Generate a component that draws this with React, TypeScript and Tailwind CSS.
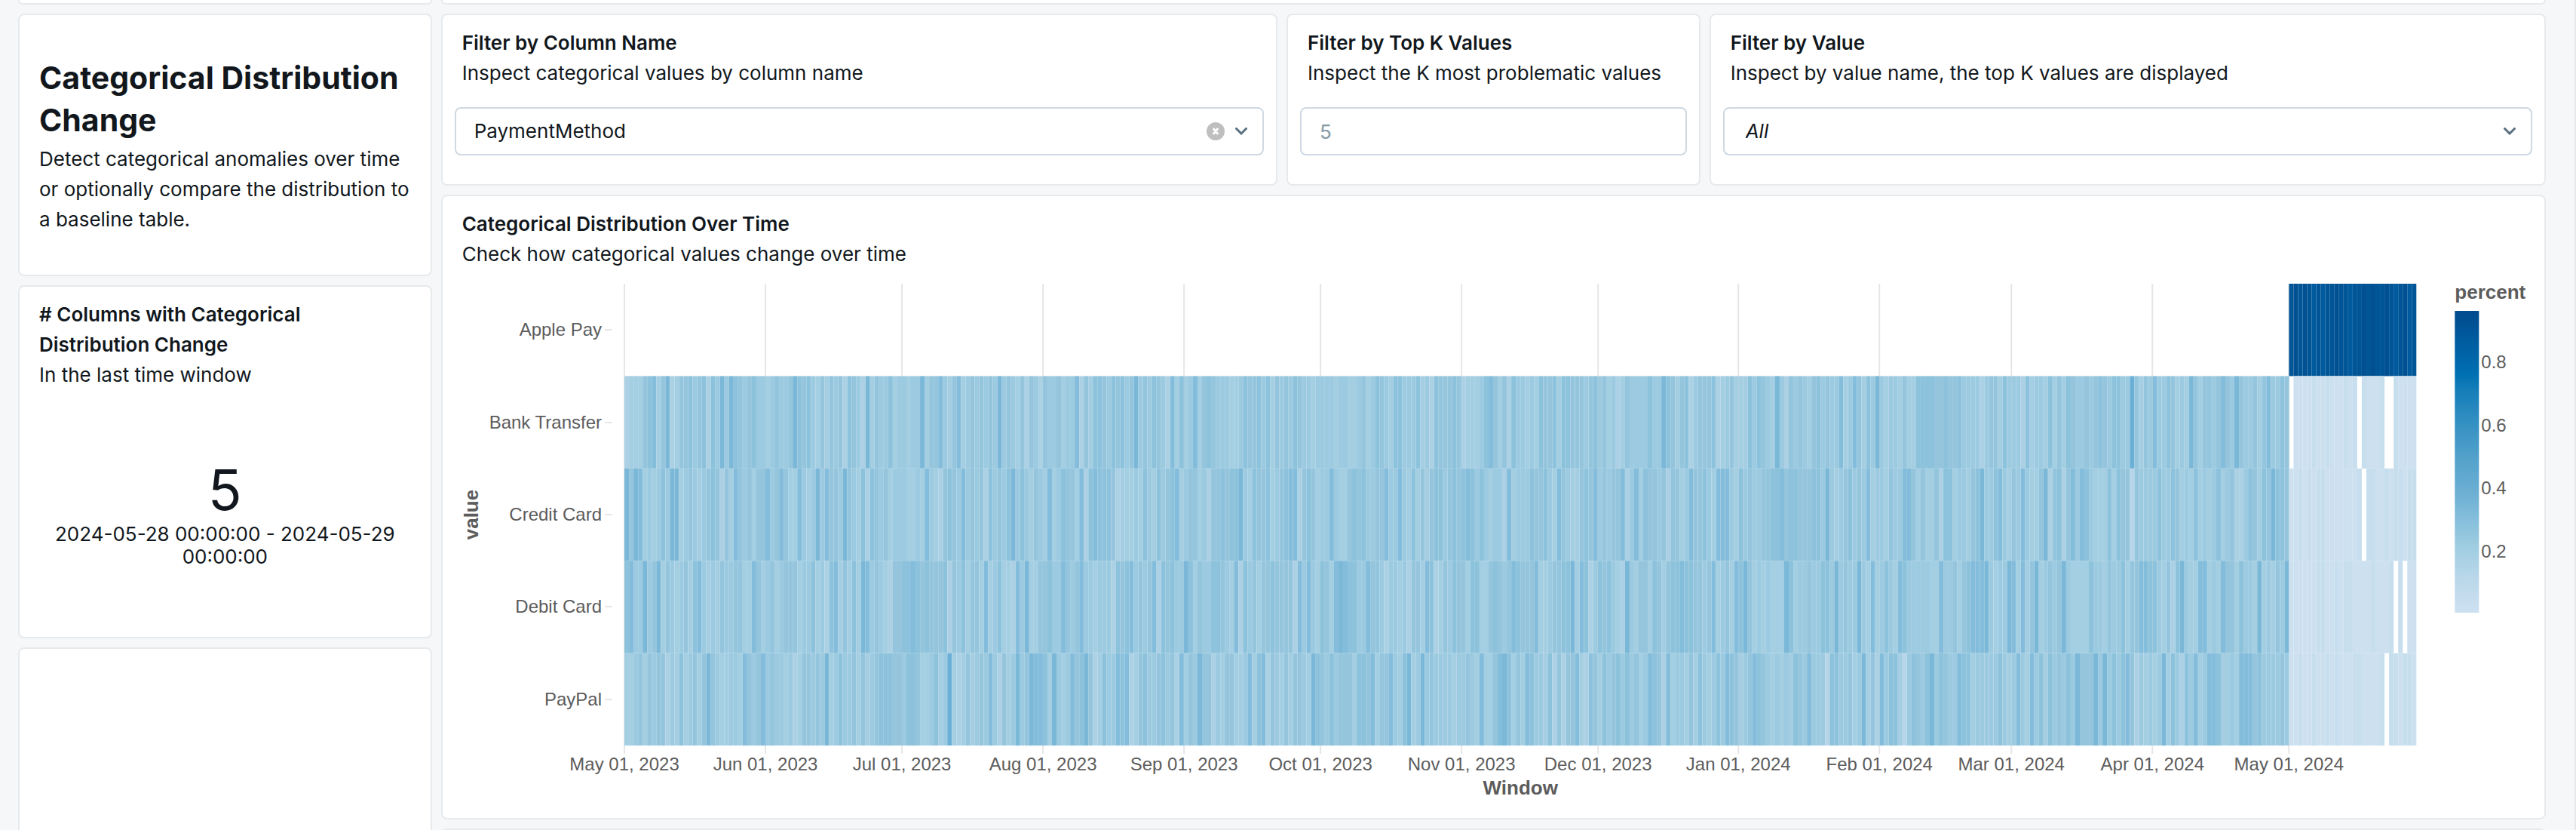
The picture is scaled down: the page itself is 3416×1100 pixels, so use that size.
import { ReactNode } from "react";

const PLOT = { left: 241, top: 20, width: 2376, height: 612 };

const BANDS = ["Apple Pay", "Bank Transfer", "Credit Card", "Debit Card", "PayPal"];

const MONTHS = [
  { day: 0, label: "May 01, 2023" },
  { day: 31, label: "Jun 01, 2023" },
  { day: 61, label: "Jul 01, 2023" },
  { day: 92, label: "Aug 01, 2023" },
  { day: 123, label: "Sep 01, 2023" },
  { day: 153, label: "Oct 01, 2023" },
  { day: 184, label: "Nov 01, 2023" },
  { day: 214, label: "Dec 01, 2023" },
  { day: 245, label: "Jan 01, 2024" },
  { day: 276, label: "Feb 01, 2024" },
  { day: 305, label: "Mar 01, 2024" },
  { day: 336, label: "Apr 01, 2024" },
  { day: 366, label: "May 01, 2024" },
];

// Share per day, one character a day: "a" and "b" are the smallest, 1-9 rise
// from there, "x", "y" and "z" are the largest, and "-" is a day without rows.
const LEVEL_COLORS: Record<string, string> = {
  a: "#cce0f0",
  b: "#c6deed",
  "1": "#b6d5e8",
  "2": "#acd1e5",
  "3": "#a4cee2",
  "4": "#9ccae0",
  "5": "#94c5dd",
  "6": "#8cc2db",
  "7": "#84bddb",
  "8": "#7bb8d8",
  "9": "#6aafd6",
  x: "#005a9e",
  y: "#005597",
  z: "#005092",
};

const DAYS = 394;
const YEAR = 366;

const SERIES = [
  "-".repeat(YEAR) + "yzyzyxyxyyzyyxyyzyzyyzyxyzxy",
  "2333567358 2355645626 4848654564 4345445865 6435354526 5428354463 4434483557 4357345454 5484543525 4254453447 2536654656 4584546542 7363473565 4443346556 4635454654 4344443443 3453465436 6444634265 5565233346 7535264434 3655636655 5456453423 5444464486 5356245556 2345333646 5438425454 3564544734 7536484344 3533666655 6556444424 5536444263 4436353654 4545654664 4953547446 5343853554 5754854453 574465 -aaaabaabaaabab-baaab--baaaa",
  "8587343464 8834543456 5253754535 5745753374 3484755485 4362654534 4433437432 5654745452 6454684643 5437346553 7267666523 3343643645 6734553425 5656684365 5634567725 6534474335 6564455744 7436353566 4565676464 3442734446 5564375433 5657454557 2473655452 5534755643 7774364544 5566756655 5664843456 4547344354 4775353352 6634435684 4674354743 3582562574 7643336365 5154444644 6534363434 6345224653 658665 aabababbaaaaaaab-bbaababbabb",
  "6744845835 4345367434 3544553375 3453455534 4634267353 6387454325 5667656555 6254635537 3463327483 3556447545 7443444265 6745457265 6448635446 6543726453 5565555274 7436537876 6447554244 3425537623 5465536633 5654576555 7334556683 7624656432 8435536535 6676655457 3453768534 3433386344 5446648454 4843734643 7644444337 4453567778 4344873735 8345458433 3364435446 3557766435 2684337734 3755364438 343548 aaaaaabbaababbaaaabaaab-b-aa",
  "3345354552 4363453585 4334437545 7454434235 5454834644 5353456665 5466533463 4932353454 7425348458 7763843475 6852364476 7235644564 5273548552 4355334736 7254353554 3865464555 3665735574 3683484544 4434454373 3578635376 4436252557 3265364564 6453476527 3443536434 6476534576 5434343654 7444166445 3483527466 3146546846 5447663444 4464347437 4636454648 5558484646 7524343483 6426473477 6334377756 444454 aabaabaababaaabbaaaab-bbabba",
].map((s) => s.replace(/ /g, ""));

const LEGEND_STOPS = [
  ["0%", "#004b8d"],
  ["9%", "#005a9e"],
  ["21%", "#0070b2"],
  ["26%", "#147db9"],
  ["37%", "#3490c2"],
  ["50%", "#56a3cc"],
  ["60%", "#6cafd3"],
  ["68%", "#82bcdb"],
  ["78%", "#9fcde1"],
  ["88%", "#b8d7e9"],
  ["100%", "#cee1f2"],
];

const LEGEND_TICKS = [
  { y: 132, label: "0.8" },
  { y: 216, label: "0.6" },
  { y: 299, label: "0.4" },
  { y: 383, label: "0.2" },
];

function Heatmap() {
  const dayWidth = PLOT.width / DAYS;
  const bandHeight = PLOT.height / BANDS.length;
  return (
    <svg
      viewBox="0 1 2787 727"
      className="block h-auto w-full"
      fontFamily="'Liberation Sans', Arial, sans-serif"
      fontSize={24}
      fill="#5c5c5c"
      role="img"
      aria-label="Categorical distribution over time"
    >
      <defs>
        <linearGradient id="percent-scale" x1="0" y1="0" x2="0" y2="1">
          {LEGEND_STOPS.map(([offset, color]) => (
            <stop key={offset} offset={offset} stopColor={color} />
          ))}
        </linearGradient>
      </defs>

      {MONTHS.map(({ day, label }) => {
        const x = Math.round(PLOT.left + day * dayWidth);
        return (
          <g key={label}>
            <line x1={x} x2={x} y1={PLOT.top} y2={643} stroke="#e6e6e6" strokeWidth={2} />
            <text x={x} y={665} textAnchor="middle">
              {label}
            </text>
          </g>
        );
      })}

      {BANDS.map((band, i) => {
        const mid = Math.round(PLOT.top + (i + 0.5) * bandHeight);
        return (
          <g key={band}>
            <line x1={215} x2={225} y1={mid} y2={mid} stroke="#e6e6e6" strokeWidth={2} />
            <text x={211} y={mid + 8} textAnchor="end">
              {band}
            </text>
          </g>
        );
      })}

      {SERIES.map((series, row) =>
        Array.from(series).map((level, day) =>
          level === "-" ? null : (
            <rect
              key={`${row}-${day}`}
              x={PLOT.left + day * dayWidth}
              y={PLOT.top + row * bandHeight}
              width={dayWidth}
              height={bandHeight}
              fill={LEVEL_COLORS[level]}
            />
          ),
        ),
      )}

      <text x={1429} y={697} textAnchor="middle" fontSize={26} fontWeight={700}>
        Window
      </text>
      <text transform="translate(47 326) rotate(-90)" textAnchor="middle" fontSize={26} fontWeight={700}>
        value
      </text>

      <text x={2668} y={40} fontSize={26} fontWeight={700}>
        percent
      </text>
      <rect x={2668} y={56} width={32} height={400} fill="url(#percent-scale)" />
      {LEGEND_TICKS.map(({ y, label }) => (
        <text key={label} x={2703} y={y}>
          {label}
        </text>
      ))}
    </svg>
  );
}

function Card({ className = "", children }: { className?: string; children?: ReactNode }) {
  return (
    <section className={`flex flex-col rounded-lg border-2 border-[#e7eaec] bg-white ${className}`}>{children}</section>
  );
}

function CardTitle({ title, subtitle, htmlFor }: { title: string; subtitle: string; htmlFor?: string }) {
  return (
    <div className="px-[26px] pt-[17px]">
      <h2 className="font-semibold">{htmlFor ? <label htmlFor={htmlFor}>{title}</label> : title}</h2>
      <p>{subtitle}</p>
    </div>
  );
}

function Chevron() {
  return (
    <svg viewBox="0 0 16 10" className="pointer-events-none h-[10px] w-4" fill="none" aria-hidden="true">
      <path d="M1.5 1.5 8 8l6.5-6.5" stroke="#5a7080" strokeWidth="3" strokeLinecap="round" />
    </svg>
  );
}

const FIELD = "h-16 w-full appearance-none rounded-lg border-2 border-[#cfd9e2] bg-white outline-none";

export default function App() {
  return (
    <main
      className="h-screen overflow-hidden border-r-2 border-[#e6e8ea] bg-[#f5f7f9] pr-[38px] pl-6 text-[26px] leading-10 text-[#11171c]"
      style={{ fontFamily: "Inter, sans-serif" }}
    >
      <div className="grid grid-cols-6 gap-3">
        <div className="flex flex-col gap-3">
          <div className="h-[6px] rounded-b-lg border-2 border-t-0 border-[#e7eaec] bg-white" />
          <Card className="min-h-[348px] justify-center px-[26px] pt-[2px]">
            <h1 className="text-[41px] leading-[56px] font-bold">Categorical Distribution Change</h1>
            <p className="mt-1">
              Detect categorical anomalies over time or optionally compare the distribution to a baseline table.
            </p>
          </Card>
          <Card className="min-h-[468px]">
            <CardTitle title="# Columns with Categorical Distribution Change" subtitle="In the last time window" />
            <div className="flex grow flex-col items-center justify-center gap-1 px-4 text-center">
              <p className="text-[74px] leading-[80px]">5</p>
              <p className="leading-[30px]">2024-05-28 00:00:00 - 2024-05-29 00:00:00</p>
            </div>
          </Card>
          <Card className="min-h-[468px]" />
        </div>

        <div className="col-span-5 flex flex-col gap-3">
          <div className="h-[6px] rounded-b-lg border-2 border-t-0 border-[#e7eaec] bg-white" />
          <div className="grid grid-cols-5 gap-3">
            <Card className="col-span-2 min-h-[228px]">
              <CardTitle
                title="Filter by Column Name"
                subtitle="Inspect categorical values by column name"
                htmlFor="column-name"
              />
              <div className="relative mx-4 mt-[25px]">
                <select id="column-name" className={`${FIELD} pr-24 pl-6`} defaultValue="PaymentMethod">
                  <option>PaymentMethod</option>
                </select>
                <div className="pointer-events-none absolute inset-y-0 right-[22px] flex items-center gap-[14px]">
                  <button type="button" aria-label="Clear column name" className="pointer-events-auto">
                    <svg viewBox="0 0 24 24" className="size-6" aria-hidden="true">
                      <circle cx="12" cy="12" r="12" fill="#bfbfbf" />
                      <path d="m9.5 9 5 6m0-6-5 6" stroke="#fff" strokeWidth="2.8" strokeLinecap="round" />
                    </svg>
                  </button>
                  <Chevron />
                </div>
              </div>
            </Card>

            <Card className="min-h-[228px]">
              <CardTitle
                title="Filter by Top K Values"
                subtitle="Inspect the K most problematic values"
                htmlFor="top-k"
              />
              <div className="mx-4 mt-[25px]">
                <input id="top-k" className={`${FIELD} px-6 placeholder:text-[#8399a6]`} placeholder="5" />
              </div>
            </Card>

            <Card className="col-span-2 min-h-[228px]">
              <CardTitle
                title="Filter by Value"
                subtitle="Inspect by value name, the top K values are displayed"
                htmlFor="value-name"
              />
              <div className="relative mx-4 mt-[25px]">
                <select id="value-name" className={`${FIELD} pr-16 pl-7 italic`} defaultValue="All">
                  <option>All</option>
                </select>
                <div className="pointer-events-none absolute inset-y-0 right-[22px] flex items-center">
                  <Chevron />
                </div>
              </div>
            </Card>
          </div>

          <Card>
            <CardTitle
              title="Categorical Distribution Over Time"
              subtitle="Check how categorical values change over time"
            />
            <Heatmap />
          </Card>
          <Card className="min-h-[228px]" />
        </div>
      </div>
    </main>
  );
}
